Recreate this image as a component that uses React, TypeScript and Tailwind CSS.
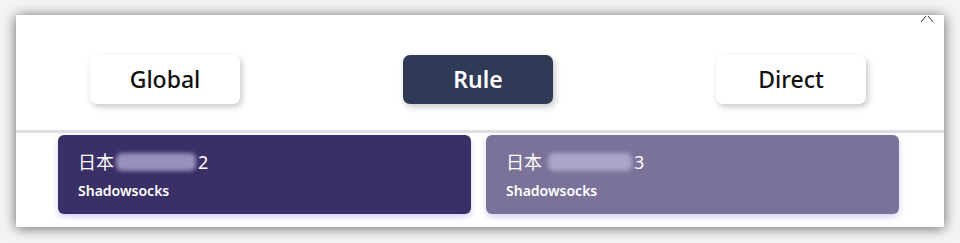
import React from "react";

const modes = ["Global", "Rule", "Direct"];

const proxies = [
  { name: "2", type: "Shadowsocks", active: true },
  { name: "3", type: "Shadowsocks", active: false },
];

export default function App() {
  return (
    <div
      className="w-[960px] h-[243px] bg-[#f4f4f4] pt-[15px] px-[16px] overflow-hidden"
      style={{ fontFamily: '"Noto Sans", "Noto Sans CJK SC", sans-serif' }}
    >
      <div className="relative w-[928px] h-[212px] bg-white shadow-[0_1px_12px_rgba(0,0,0,0.6)]">
        {/* clipped close icon */}
        <svg
          className="absolute right-[10px] top-0"
          width="14"
          height="8"
          viewBox="0 0 14 8"
          fill="none"
          stroke="#333"
          strokeWidth="1"
        >
          <path d="M1 7 L6 1" />
          <path d="M8 1 L13 7" />
        </svg>

        <div className="h-[118px] flex items-start gap-[163px] pl-[74px] pt-[40px] border-b-[3px] border-[#dedee4]">
          {modes.map((m) => {
            const active = m === "Rule";
            return (
              <button
                key={m}
                className={`w-[150px] h-[49px] rounded-[7px] text-[23px] flex items-center justify-center shadow-[2px_3px_6px_rgba(0,0,0,0.22)] ${
                  active ? "bg-[#2f3a56] text-white font-semibold" : "bg-white text-[#111] font-medium"
                }`}
              >
                {m}
              </button>
            );
          })}
        </div>

        <div className="grid grid-cols-[413px_413px] gap-[15px] pl-[42px] pt-[2px]">
          {proxies.map((p) => (
            <div
              key={p.name}
              className={`h-[79px] rounded-[6px] px-[20px] pt-[14px] text-white shadow-[0_3px_6px_rgba(140,120,230,0.35)] ${
                p.active ? "bg-[#3a2f66]" : "bg-[#7a7299]"
              }`}
            >
              <div className="flex items-center text-[18px] leading-[26px]">
                <span>日本</span>
                <span
                  className={`inline-block h-[18px] rounded-[6px] blur-[2px] ${
                    p.active ? "w-[80px] ml-[2px] bg-[#9690bc]" : "w-[84px] ml-[6px] bg-[#aba5c8]"
                  }`}
                />
                <span className="ml-[2px]">{p.name}</span>
              </div>
              <div className="text-[14px] font-semibold mt-[7px] leading-[18px]">{p.type}</div>
            </div>
          ))}
        </div>
      </div>
    </div>
  );
}
